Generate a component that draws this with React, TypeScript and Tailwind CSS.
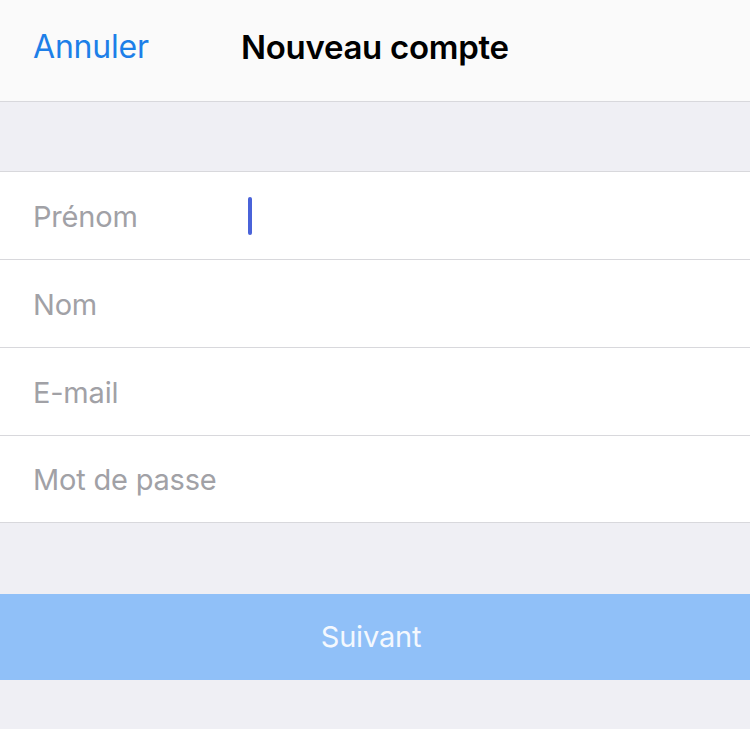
import { useState } from "react";

const fields = ["Prénom", "Nom", "E-mail", "Mot de passe"];

const FieldRow = ({ label, focused, last }: { label: string; focused?: boolean; last?: boolean }) => (
  <div className={`flex items-center pl-[33px] ${last ? "h-[86px]" : "h-[88px] border-b border-[#d8d8dc]"}`}>
    <span className="w-[215px] text-[29px] text-[#a1a1a6] tracking-[-0.2px] pt-[2px]">{label}</span>
    {focused && <span className="w-[4px] h-[38px] rounded-full bg-[#4a63d9]" />}
  </div>
);

export default function App() {
  const [active] = useState(0);

  return (
    <div className="w-[750px] h-[729px] bg-[#efeff4] overflow-hidden font-['Inter',sans-serif]">
      {/* Nav bar */}
      <header className="h-[102px] bg-[#fafafa] border-b border-[#d8d8dc] flex items-start pt-[23px] pl-[33px]">
        <button className="text-[32px] text-[#1d7fe8] w-[208px] text-left tracking-[-0.2px]">Annuler</button>
        <h1 className="text-[33px] font-semibold text-black tracking-[-0.3px] leading-[48px]">Nouveau compte</h1>
      </header>

      <div className="h-[69px]" />

      {/* Form */}
      <section className="bg-white border-y border-[#d8d8dc]">
        {fields.map((f, i) => (
          <FieldRow key={f} label={f} focused={i === active} last={i === fields.length - 1} />
        ))}
      </section>

      <div className="h-[71px]" />

      <button className="w-full h-[86px] bg-[#90c0f8] text-[#f4f8fe] text-[29px] tracking-[-0.2px] flex items-center justify-center pr-[8px]">
        Suivant
      </button>
    </div>
  );
}
